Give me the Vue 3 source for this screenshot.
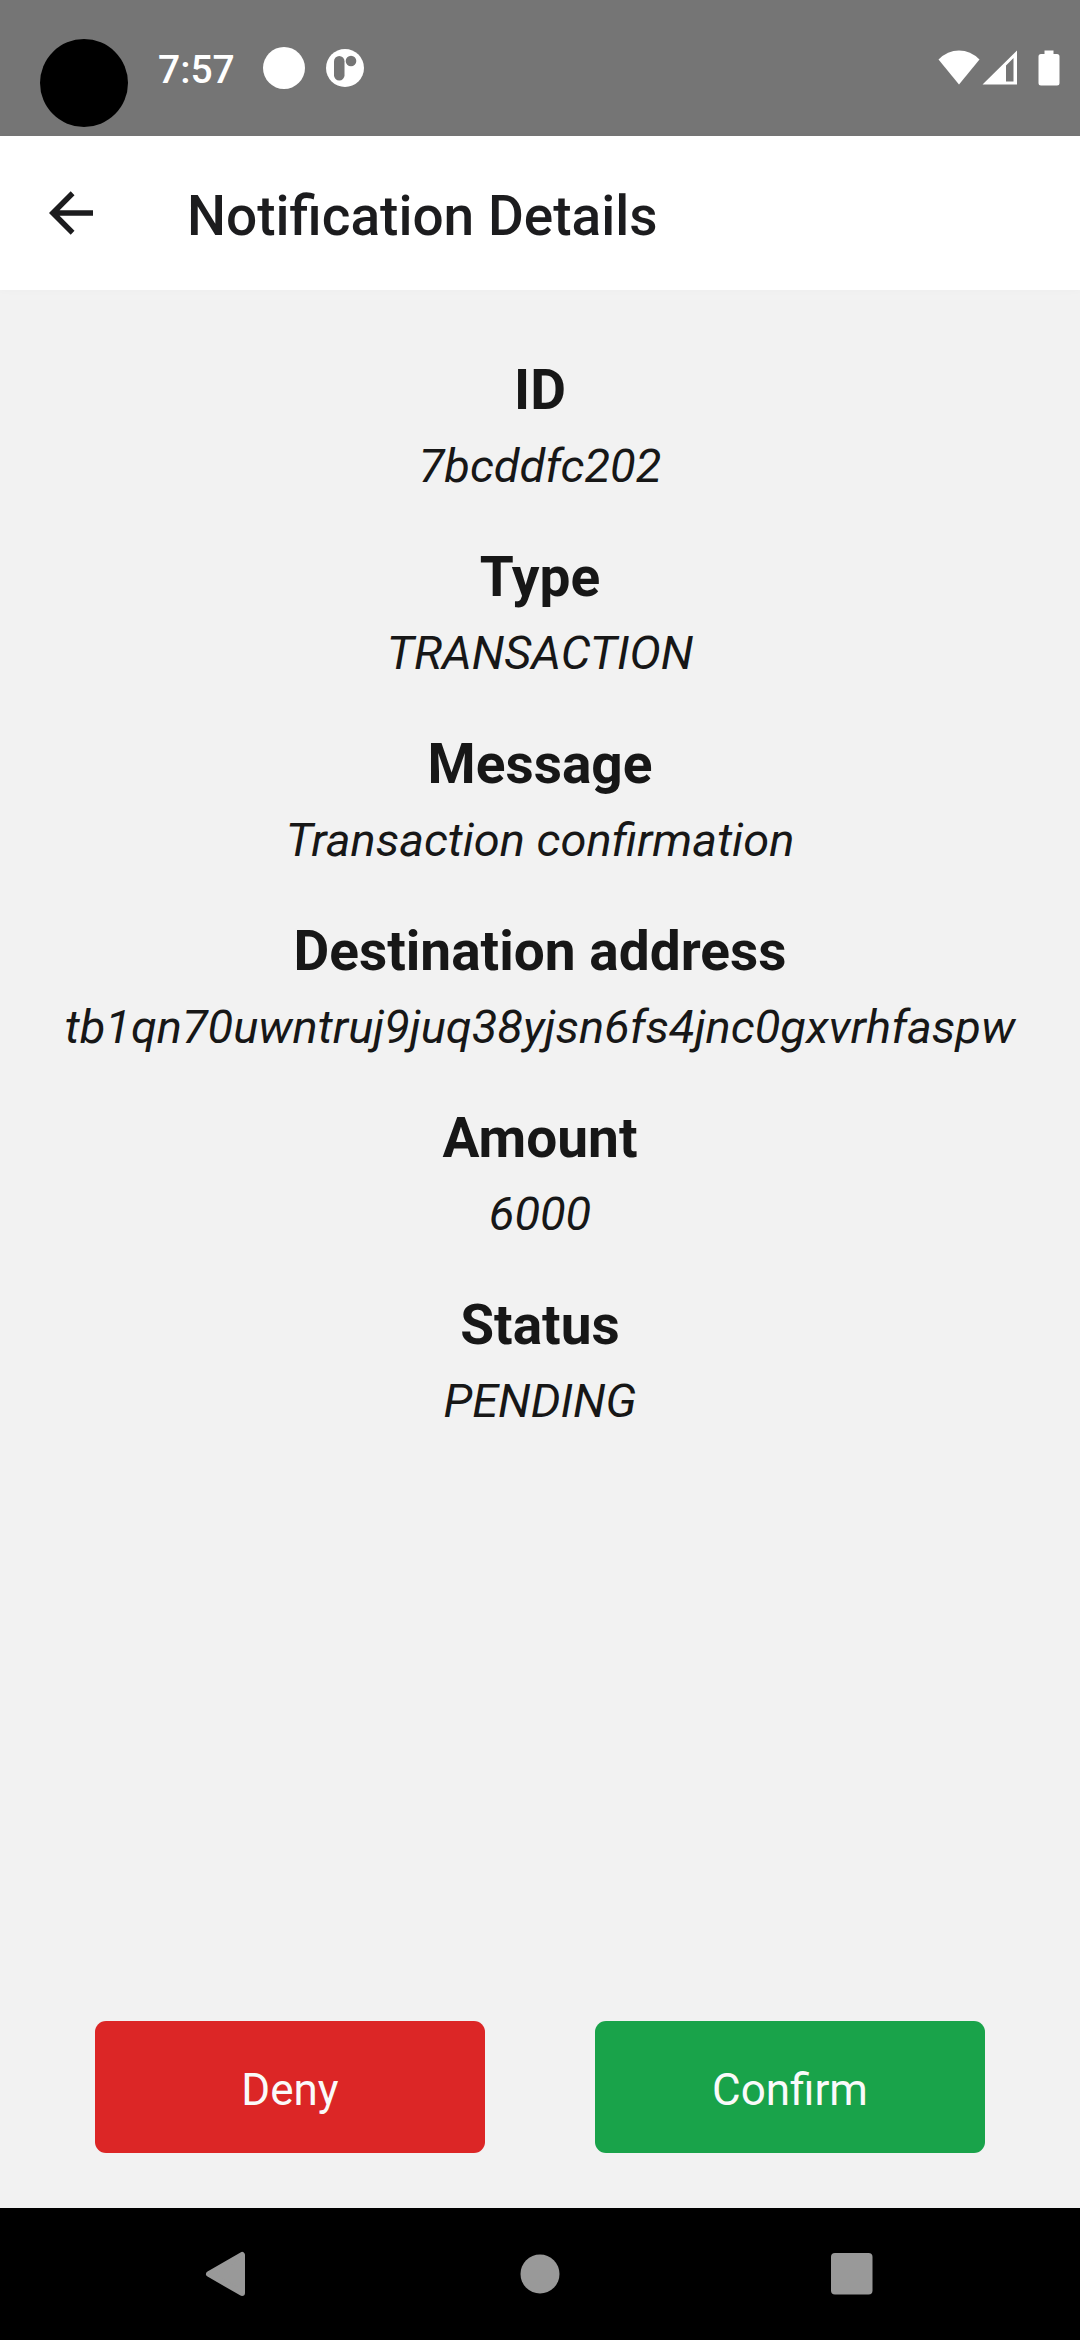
<script setup>
const details = [
  { label: 'ID', value: '7bcddfc202' },
  { label: 'Type', value: 'TRANSACTION' },
  { label: 'Message', value: 'Transaction confirmation' },
  { label: 'Destination address', value: 'tb1qn70uwntruj9juq38yjsn6fs4jnc0gxvrhfaspw' },
  { label: 'Amount', value: '6000' },
  { label: 'Status', value: 'PENDING' },
]
</script>

<template>
  <div class="screen">
    <div class="status-bar">
      <span class="camera"></span>
      <span class="time">7:57</span>
      <span class="dot"></span>
      <svg class="app-icon" width="38" height="38" viewBox="0 0 38 38" aria-hidden="true">
        <circle cx="19" cy="19" r="19" fill="#fff" />
        <rect x="8" y="7" width="10.5" height="24.500" rx="5.250" fill="#757575" />
        <circle cx="25" cy="12" r="5.300" fill="#757575" />
      </svg>
      <div class="system-icons">
        <svg width="42" height="36" viewBox="0 0 42 36" aria-hidden="true">
          <path d="M0.500 9.500Q9.500 0.500 21 0.500T41.500 9.500L21 34.500Z" fill="#fff" />
        </svg>
        <svg width="36" height="36" viewBox="0 0 36 36" aria-hidden="true">
          <path fill-rule="evenodd" d="M0.500 34.500L35 0.500V34.500ZM24 15.500V31.500H31.500V8Z" fill="#fff" />
        </svg>
        <svg class="battery" width="22" height="36" viewBox="0 0 22 36" aria-hidden="true">
          <path d="M6.500 0.500H15.500V4H19Q21.500 4 21.500 6.500V33Q21.500 35.500 19 35.500H3Q0.500 35.500 0.500 33V6.500Q0.500 4 3 4H6.500Z" fill="#fff" />
        </svg>
      </div>
    </div>

    <header class="app-bar">
      <button class="back" type="button" aria-label="Back">
        <svg width="44" height="44" viewBox="0 0 44 44" aria-hidden="true">
          <path d="M44 19.200V24.800H10.600L25.500 39.700L21.700 43.800L0 22L21.700 0.200L25.500 4.300L10.600 19.200Z" fill="#1c1c1e" />
        </svg>
      </button>
      <h1 class="title">Notification Details</h1>
    </header>

    <main class="content">
      <dl class="details">
        <div v-for="item in details" :key="item.label" class="detail">
          <dt>{{ item.label }}</dt>
          <dd>{{ item.value }}</dd>
        </div>
      </dl>
      <div class="actions">
        <button class="action deny" type="button">Deny</button>
        <button class="action confirm" type="button">Confirm</button>
      </div>
    </main>

    <nav class="nav-bar">
      <button type="button" aria-label="Back">
        <svg width="46" height="46" viewBox="0 0 46 46" aria-hidden="true">
          <path d="M4 23L37 4V42Z" fill="#999" stroke="#999" stroke-width="6" stroke-linejoin="round" />
        </svg>
      </button>
      <button type="button" aria-label="Home">
        <svg width="40" height="40" viewBox="0 0 40 40" aria-hidden="true">
          <circle cx="20" cy="20" r="19.500" fill="#999" />
        </svg>
      </button>
      <button type="button" aria-label="Recent apps">
        <svg width="42" height="42" viewBox="0 0 42 42" aria-hidden="true">
          <rect width="41.500" height="41.500" rx="4" fill="#999" />
        </svg>
      </button>
    </nav>
  </div>
</template>

<style>
body {
  margin: 0;
}
</style>

<style scoped>
.screen {
  min-height: 100vh;
  display: flex;
  flex-direction: column;
  background: #f2f2f2;
  font-family: Roboto, sans-serif;
  color: #171717;
}

button {
  border: 0;
  padding: 0;
  background: none;
  font: inherit;
}

svg {
  display: block;
}

.status-bar {
  height: 136px;
  box-sizing: border-box;
  padding: 0 20px 0 40px;
  display: flex;
  align-items: center;
  background: #757575;
  color: #fff;
}

.camera {
  width: 88px;
  height: 88px;
  margin-top: 30px;
  border-radius: 50%;
  background: #000;
}

.time {
  margin-left: 30px;
  padding-top: 4px;
  font-size: 39px;
  font-weight: 500;
  line-height: 48px;
}

.dot {
  width: 42px;
  height: 42px;
  margin-left: 28px;
  border-radius: 50%;
  background: #fff;
}

.app-icon {
  margin-left: 21px;
}

.system-icons {
  margin-left: auto;
  display: flex;
  gap: 2px;
}

.battery {
  margin-left: 18px;
}

.app-bar {
  height: 154px;
  display: flex;
  align-items: center;
  background: #fff;
  box-shadow: 0 1px 8px rgba(0, 0, 0, 0.02);
}

.back {
  margin-left: 49px;
}

.title {
  margin: 0 0 0 94px;
  padding-top: 6px;
  font-size: 55px;
  font-weight: 500;
  line-height: 64px;
  color: #1c1c1e;
}

.content {
  flex: 1;
  padding: 60px 40px 55px;
  display: flex;
  flex-direction: column;
  justify-content: space-between;
}

.details {
  margin: 0;
  display: flex;
  flex-direction: column;
  gap: 35px;
  text-align: center;
}

dt {
  font-size: 55px;
  font-weight: 700;
  line-height: 80px;
}

dd {
  margin: 0;
  font-size: 47px;
  font-style: italic;
  line-height: 72px;
}

.actions {
  margin: 0 55px;
  display: flex;
  gap: 110px;
}

.action {
  flex: 1;
  height: 132px;
  padding-top: 6px;
  border-radius: 11px;
  font-size: 44px;
  line-height: 64px;
  color: #fafafa;
}

.deny {
  background: #dc2626;
}

.confirm {
  background: #19a34a;
}

.nav-bar {
  height: 132px;
  padding: 0 72px;
  display: flex;
  align-items: center;
  background: #000;
}

.nav-bar button {
  flex: 1;
  display: flex;
  justify-content: center;
}
</style>
